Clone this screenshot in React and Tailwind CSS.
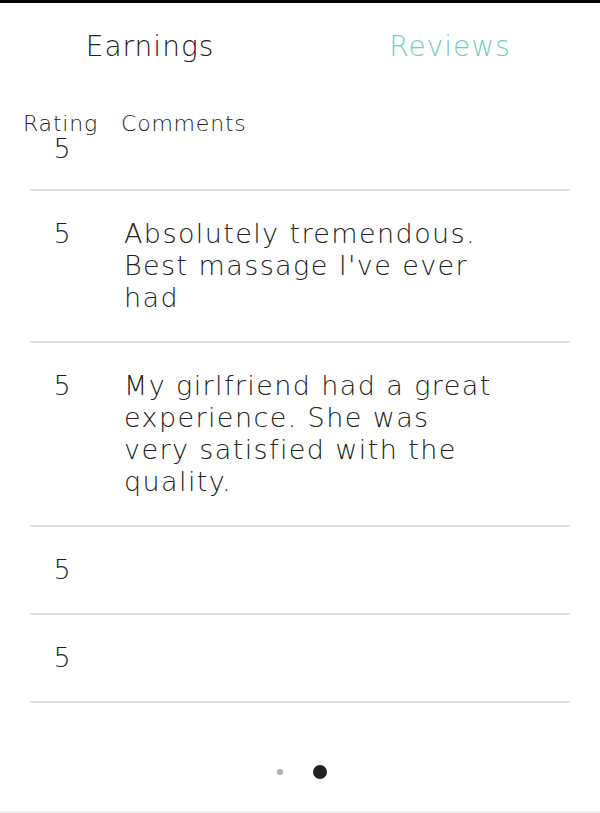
const reviews = [
  { rating: 5, comment: '' },
  { rating: 5, comment: "Absolutely tremendous. Best massage I've ever had" },
  { rating: 5, comment: 'My girlfriend had a great experience. She was very satisfied with the quality.' },
  { rating: 5, comment: '' },
  { rating: 5, comment: '' },
];

function ReviewRow({ review, first }) {
  return (
    <div className={`flex border-b-2 border-[#e0e0e0] ${first ? 'pt-0 pb-[24px]' : 'py-[27px]'}`}>
      <div className="w-[64px] text-center leading-[32px] text-[27px]">{review.rating}</div>
      <div className="ml-[30px] w-[368px] leading-[32px] text-[27px] tracking-[1.4px]">{review.comment}</div>
    </div>
  );
}

export default function App() {
  return (
    <div className="w-[600px] h-[813px] bg-white text-[#222] font-extralight flex flex-col" style={{ fontFamily: '"DejaVu Sans", sans-serif' }}>
      <div className="h-[3px] bg-black" />
      <div className="flex h-[88px] items-center">
        <div className="flex-1 text-center text-[28px] tracking-[1px]">Earnings</div>
        <div className="flex-1 text-center text-[28px] tracking-[1px] text-[#79cbc2]">Reviews</div>
      </div>
      <div className="flex pl-[23px] h-[20px] mt-[22px] items-center text-[22px] tracking-[0.8px] gap-[23px]">
        <span>Rating</span>
        <span>Comments</span>
      </div>
      <div className="px-[30px]">
        {reviews.map((r, i) => (
          <ReviewRow key={i} review={r} first={i === 0} />
        ))}
      </div>
      <div className="flex justify-center items-center gap-[30px] pl-[4px] mt-[62px]">
        <span className="w-[6px] h-[6px] rounded-full bg-[#b0b0b0]" />
        <span className="w-[14px] h-[14px] rounded-full bg-[#222]" />
      </div>
      <div className="flex-1" />
      <div className="h-[2px] bg-[#f0f0f0]" />
    </div>
  );
}
